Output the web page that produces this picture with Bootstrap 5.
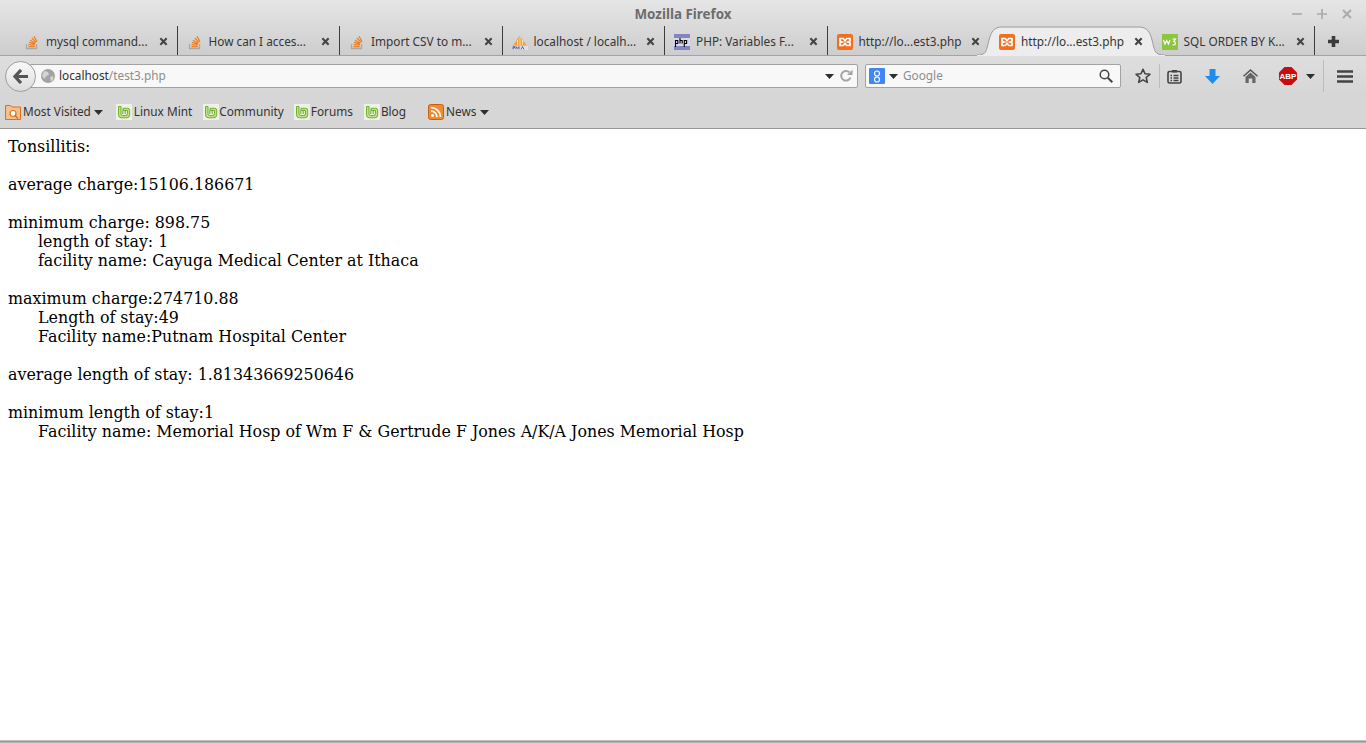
<!DOCTYPE html>
<html lang="en">
<head>
<meta charset="utf-8">
<title>Mozilla Firefox</title>
<link rel="stylesheet" href="https://cdn.jsdelivr.net/npm/bootstrap@5.3.0/dist/css/bootstrap.min.css">
<style>
html,body{height:100%;margin:0;background:#fff;overflow:hidden}
.win-shell{height:743px;font-family:"Noto Sans",sans-serif;font-size:12px;color:#333}
.chrome-top{background:linear-gradient(#e6e6e6,#cdcdcd);height:56px;border-bottom:1px solid #a3a3a3}
.title-row{height:26px;display:grid;grid-template-columns:1fr auto 1fr;align-items:center}
.win-title{font-weight:700;font-size:13.4px;color:#6d6d6d;line-height:1;padding-top:4px}
.win-ctrls{justify-self:end;gap:15px;padding:2px 14px 0 0}
.tab-row{height:29px;padding-left:15px}
.tab-item{width:162.5px;height:29px;padding:2px 8px 0 9px;border-right:1px solid #3c3c3c;white-space:nowrap;flex:none}
.tab-item.no-sep{border-right-color:transparent}
.tab-item svg.fav{flex:none;margin-right:6px;width:16px;height:16px}
.tab-text{flex:1 1 auto;overflow:hidden;font-size:11.8px;line-height:16px;color:#353535;margin-bottom:2px}
.tab-x{flex:none;margin-left:2px;margin-right:1px}
.tab-item.on{position:relative;z-index:1;border-right-color:transparent}
.tab-curve{position:absolute;left:-13px;top:0;width:188px;height:30px;z-index:-1}
.tab-add{width:36px;height:29px;padding-top:2px}
.bar-nav{height:40px;background:linear-gradient(#dedede,#d6d6d6);padding:0 0 0 5px}
.back-btn{width:31px;height:31px;border-radius:50%;border:1px solid #9d9d9d;background:linear-gradient(#fafafa,#dcdcdc);position:relative;z-index:1;margin-right:-6px;flex:none}
.url-box{width:828px;height:24px;background:#f8f8f8;border:1px solid #a2a2a2;border-radius:0 2px 2px 0;padding:0 4px 0 10px;flex:none}
.url-host{color:#333;font-size:11.8px}
.url-path{color:#8d8d8d;font-size:11.8px}
.reload-ico{margin-left:5px}
.find-box{width:256px;height:24px;background:#f8f8f8;border:1px solid #a2a2a2;border-radius:2px;margin-left:7px;padding:0 3px;flex:none}
.find-hint{color:#8d8d8d;font-size:11.8px;margin-left:5px}
.tool-cell{flex:none}
.tool-sep{width:1px;background:#bcbcbc;flex:none}
.bar-marks{height:33px;background:#d6d6d6;border-bottom:1px solid #989898;padding-left:5px}
.mark-item{white-space:nowrap;font-size:11.8px;color:#333;flex:none}
.mark-item svg{flex:none}
.page-body{font-family:"DejaVu Serif",serif;font-size:15.87px;line-height:19px;color:#000;padding:8px;flex:1 1 auto}
.gap-line{height:19px}
.indent-line{padding-left:30px}
.bottom-edge{height:3px;background:linear-gradient(#cfcfcf,#8f8f8f 60%,#c9c9c9);flex:none}
.flex-none{flex:none}
.tool-group{height:39px}
.star-tool{margin-left:14px}
.sep-a{height:24px;margin-left:8px}
.clip-tool{margin-left:7px}
.dl-tool{margin-left:23px}
.home-tool{margin-left:23px}
.abp-tool{margin-left:21px}
.abp-drop{margin-left:9px}
.sep-b{height:32px;margin-left:8px}
.menu-tool{margin-left:13px}
.ms-custom-a{margin-left:2px}
.caret-a{margin-left:3px}
.caret-b{margin-left:4px}
.lbl{margin-left:1px}
.lbl-m{margin-left:2px}
.lbl-c{margin-left:0}
.lbl-b{margin-left:2px}
.mk-1{margin-left:13px}
.mk-2{margin-left:11px}
.mk-3{margin-left:10px}
.mk-4{margin-left:11px}
.mk-5{margin-left:22px}
</style>
</head>
<body>
<svg width="0" height="0" class="d-none">
<symbol id="so" viewBox="0 0 16 16"><path d="M2.5 10v4.500h10V10" fill="none" stroke="#a8a8a8" stroke-width="1.300"/><path d="M4.500 12.600h6.200M4.600 10.600l6.100.6M5 8.400l6 1.600M6 6.200l5.400 3M7.800 4l4.300 4.400M10 2.200l3 5.400" fill="none" stroke="#ee8126" stroke-width="1.300"/></symbol>
<symbol id="xam" viewBox="0 0 16 16"><rect width="16" height="16" rx="2" fill="#f0701f"/><path d="M3 4.500h3.200L8 6.600l1.800-2.100H13v2.700L10.800 8l2.200.8v2.700H9.800L8 9.400l-1.800 2.100H3V8.800L5.200 8 3 7.200z" fill="none" stroke="#fff" stroke-width="1.700"/></symbol>
<symbol id="mint" viewBox="0 0 16 16"><rect width="16" height="16" fill="#eef1ea"/><path d="M2.500 2.500h2.500v7.300q0 1.700 1.700 1.700h3.100q1.700 0 1.700-1.700V6.500H7V4.300h4.700q2 0 2 2v4.500q0 3-3 3H5.500q-3 0-3-3z" fill="#bfe188" stroke="#6fb12b" stroke-width="1"/><path d="M6.800 10V6.500M9.200 10V6.500" stroke="#6fb12b" stroke-width="1.100"/></symbol>
<symbol id="close" viewBox="0 0 10 10"><path d="M1.500 1.500l7 7M8.500 1.500l-7 7" stroke="#444" stroke-width="2.300"/></symbol>
<symbol id="drop" viewBox="0 0 9 5"><path d="M0 0h9L4.500 5z" fill="#2e2e2e"/></symbol>
</svg>
<div class="win-shell d-flex flex-column">
  <div class="chrome-top flex-none">
    <div class="title-row">
      <div></div>
      <div class="win-title">Mozilla Firefox</div>
      <div class="win-ctrls d-flex align-items-center">
        <svg width="10" height="10" viewBox="0 0 10 10"><path d="M0 5h10" stroke="#a9a9a9" stroke-width="1.600"/></svg>
        <svg width="10" height="10" viewBox="0 0 10 10"><path d="M0 5h10M5 0v10" stroke="#a9a9a9" stroke-width="1.600"/></svg>
        <svg width="10" height="10" viewBox="0 0 10 10"><path d="M1 1l8 8M9 1l-8 8" stroke="#a9a9a9" stroke-width="1.800"/></svg>
      </div>
    </div>
    <div class="tab-row d-flex">
      <div class="tab-item d-flex align-items-center"><svg class="fav"><use href="#so"/></svg><span class="tab-text">mysql command...</span><svg class="tab-x" width="9" height="9"><use href="#close"/></svg></div>
      <div class="tab-item d-flex align-items-center"><svg class="fav"><use href="#so"/></svg><span class="tab-text">How can I acces...</span><svg class="tab-x" width="9" height="9"><use href="#close"/></svg></div>
      <div class="tab-item d-flex align-items-center"><svg class="fav"><use href="#so"/></svg><span class="tab-text">Import CSV to m...</span><svg class="tab-x" width="9" height="9"><use href="#close"/></svg></div>
      <div class="tab-item d-flex align-items-center"><svg class="fav" viewBox="0 0 16 16"><path d="M1 11.500L7.500 2 15 11.500z" fill="#f5a13c"/><path d="M5.500 11V6M8 11V3.500M10.500 11V6" stroke="#fce3bd" stroke-width=".9"/><rect x="0" y="12" width="16" height="4" fill="#dfe1ea"/><path d="M1 15.500v-3h1.500v1.500H1M4 15.500v-3l1.500 2 1.500-2v3M9 15.500l1.500-3 1.500 3" stroke="#3e4a82" stroke-width=".8" fill="none"/></svg><span class="tab-text">localhost / localh...</span><svg class="tab-x" width="9" height="9"><use href="#close"/></svg></div>
      <div class="tab-item d-flex align-items-center"><svg class="fav" viewBox="0 0 16 16"><rect width="16" height="16" fill="#8484c0"/><rect y="4" width="16" height="8" fill="#d9d9ee"/><path d="M1.500 13V6.500h2.300v3H1.500M6 4v5.500M6 6.500h2.200v3M10.300 13V6.500h2.300v3h-2.300" stroke="#000" stroke-width="1.100" fill="none"/></svg><span class="tab-text">PHP: Variables F...</span><svg class="tab-x" width="9" height="9"><use href="#close"/></svg></div>
      <div class="tab-item no-sep d-flex align-items-center"><svg class="fav"><use href="#xam"/></svg><span class="tab-text">http://lo...est3.php</span><svg class="tab-x" width="9" height="9"><use href="#close"/></svg></div>
      <div class="tab-item on d-flex align-items-center">
        <svg class="tab-curve" viewBox="0 0 188 30"><path d="M0 29c10 0 9-4 12-15C14 6 17 1 25 1h137c8 0 11 5 13 13 3 11 2 15 13 15v1H0z" fill="#ededed" stroke="#9b9b9b"/><path d="M0 30h188" stroke="#ededed" stroke-width="2"/></svg>
        <svg class="fav"><use href="#xam"/></svg><span class="tab-text">http://lo...est3.php</span><svg class="tab-x" width="9" height="9"><use href="#close"/></svg></div>
      <div class="tab-item d-flex align-items-center"><svg class="fav" viewBox="0 0 16 16"><rect width="16" height="16" fill="#8cc63f"/><path d="M1.500 6l1.500 4 1.700-3.500L6.500 10l1.500-4M10.500 5h3l-1.700 2.500c2 0 2.300 3.500-.3 3.500h-1" stroke="#fff" stroke-width="1.200" fill="none"/></svg><span class="tab-text">SQL ORDER BY K...</span><svg class="tab-x" width="9" height="9"><use href="#close"/></svg></div>
      <div class="tab-add d-flex align-items-center justify-content-center"><svg width="11" height="11" viewBox="0 0 11 11"><path d="M5.500 0v11M0 5.500h11" stroke="#3c3c3c" stroke-width="3.600"/></svg></div>
    </div>
  </div>

  <div class="bar-nav d-flex align-items-center flex-none">
    <div class="back-btn d-flex align-items-center justify-content-center">
      <svg width="16" height="15" viewBox="0 0 16 15"><path d="M8 1L2 7.500 8 14M2.500 7.500H15" fill="none" stroke="#555" stroke-width="3.200"/></svg>
    </div>
    <div class="url-box d-flex align-items-center">
      <svg class="me-1" width="14" height="14" viewBox="0 0 14 14"><circle cx="7" cy="7" r="7" fill="#a3a3a3"/><path d="M3 2l4 1 1 3-3 1-1 3-3-3zM9 8l3-1 .5 3-2.500 2.500z" fill="#d4d4d4"/></svg>
      <span class="url-host">localhost</span><span class="url-path">/test3.php</span>
      <svg class="ms-auto" width="9" height="5"><use href="#drop"/></svg>
      <svg class="reload-ico" width="14" height="14" viewBox="0 0 14 14"><path d="M11.500 8.500a4.800 4.800 0 1 1-1.200-5.200" fill="none" stroke="#a3a3a3" stroke-width="2"/><path d="M8 6h5.500V.5z" fill="#a3a3a3"/></svg>
    </div>
    <div class="find-box d-flex align-items-center">
      <svg width="16" height="16" viewBox="0 0 16 16" class="flex-none"><rect width="16" height="16" rx="1" fill="#4285f4"/><circle cx="8" cy="5.500" r="2.500" fill="none" stroke="#fff" stroke-width="1.200"/><circle cx="8" cy="11.500" r="2.500" fill="none" stroke="#fff" stroke-width="1.200"/></svg>
      <svg class="ms-1" width="9" height="5"><use href="#drop"/></svg>
      <span class="find-hint">Google</span>
      <svg class="ms-auto me-1" width="14" height="14" viewBox="0 0 14 14"><circle cx="5.500" cy="5.500" r="4.300" fill="none" stroke="#444" stroke-width="1.500"/><path d="M8.800 8.800L13.300 13.300" stroke="#444" stroke-width="2"/></svg>
    </div>
    <div class="d-flex align-items-center tool-group">
      <svg class="tool-cell star-tool" width="16" height="16" viewBox="0 0 16 16"><path d="M8 1.300l2 4.500 4.900.5-3.700 3.200 1.100 4.900L8 11.900l-4.300 2.500 1.100-4.900L1.100 6.300 6 5.800z" fill="none" stroke="#444" stroke-width="1.600" stroke-linejoin="round"/></svg>
      <div class="tool-sep sep-a"></div>
      <svg class="tool-cell clip-tool" width="15" height="15" viewBox="0 0 15 15"><rect x="1" y="2.500" width="13" height="11.500" rx="1.500" fill="none" stroke="#444" stroke-width="1.600"/><path d="M5 1h5v2.500H5z" fill="#444"/><path d="M3.500 6.500h1.500M6.500 6.500h5M3.500 9h1.500M6.500 9h5M3.500 11.500h1.500M6.500 11.500h5" stroke="#444" stroke-width="1.300"/></svg>
      <svg class="tool-cell dl-tool" width="15" height="15" viewBox="0 0 15 15"><path d="M4.500 0h6v7H15l-7.500 8L0 7h4.500z" fill="#1c8ef0"/></svg>
      <svg class="tool-cell home-tool" width="15" height="14" viewBox="0 0 15 14"><path d="M7.500 0L15 6.800l-1 1L7.500 2 1 7.800l-1-1z" fill="#555"/><path d="M2.500 8l5-4.500 5 4.500v6H9.300V9.500H5.700V14H2.500z" fill="#666"/></svg>
      <svg class="tool-cell abp-tool" width="18" height="18" viewBox="0 0 18 18"><path d="M5.500 0h7L18 5.500v7L12.500 18h-7L0 12.500v-7z" fill="#c70d0d"/><text x="9" y="12" text-anchor="middle" font-family="Liberation Sans,sans-serif" font-weight="700" font-size="8" fill="#fff">ABP</text></svg>
      <svg class="tool-cell abp-drop" width="9" height="5"><use href="#drop"/></svg>
      <div class="tool-sep sep-b"></div>
      <svg class="tool-cell menu-tool" width="16" height="13" viewBox="0 0 16 13"><path d="M0 1.500h16M0 6.500h16M0 11.500h16" stroke="#444" stroke-width="2.400"/></svg>
    </div>
  </div>

  <div class="bar-marks d-flex align-items-center flex-none">
    <div class="mark-item d-flex align-items-center">
      <svg width="16" height="16" viewBox="0 0 16 16"><path d="M.5 3V1.500h5L7 3h8.500v12.500H.5z" fill="#f3c089" stroke="#d9701b"/><circle cx="8" cy="9.500" r="3" fill="#fff" stroke="#d9701b" stroke-width="1.200"/><path d="M10 11.500l3 3" stroke="#d9701b" stroke-width="1.500"/></svg>
      <span class="ms-custom-a">Most Visited</span>
      <svg class="caret-a" width="9" height="5"><use href="#drop"/></svg>
    </div>
    <div class="mark-item mk-1 d-flex align-items-center"><svg width="16" height="16"><use href="#mint"/></svg><span class="lbl-m">Linux Mint</span></div>
    <div class="mark-item mk-2 d-flex align-items-center"><svg width="16" height="16"><use href="#mint"/></svg><span class="lbl-c">Community</span></div>
    <div class="mark-item mk-3 d-flex align-items-center"><svg width="16" height="16"><use href="#mint"/></svg><span class="lbl">Forums</span></div>
    <div class="mark-item mk-4 d-flex align-items-center"><svg width="16" height="16"><use href="#mint"/></svg><span class="lbl">Blog</span></div>
    <div class="mark-item mk-5 d-flex align-items-center">
      <svg width="16" height="16" viewBox="0 0 16 16"><rect x=".5" y=".5" width="15" height="15" rx="2" fill="#f28a2e" stroke="#c9601a"/><circle cx="4.500" cy="11.500" r="1.500" fill="#fff"/><path d="M3 7a6 6 0 0 1 6 6M3 3.500A9.500 9.500 0 0 1 12.500 13" fill="none" stroke="#fff" stroke-width="1.700"/></svg>
      <span class="lbl-b">News</span>
      <svg class="caret-b" width="9" height="5"><use href="#drop"/></svg>
    </div>
  </div>

  <main class="page-body">
    <div>Tonsillitis:</div>
    <div class="gap-line"></div>
    <div>average charge:15106.186671</div>
    <div class="gap-line"></div>
    <div>minimum charge: 898.75</div>
    <div class="indent-line">length of stay: 1</div>
    <div class="indent-line">facility name: Cayuga Medical Center at Ithaca</div>
    <div class="gap-line"></div>
    <div>maximum charge:274710.88</div>
    <div class="indent-line">Length of stay:49</div>
    <div class="indent-line">Facility name:Putnam Hospital Center</div>
    <div class="gap-line"></div>
    <div>average length of stay: 1.81343669250646</div>
    <div class="gap-line"></div>
    <div>minimum length of stay:1</div>
    <div class="indent-line">Facility name: Memorial Hosp of Wm F &amp; Gertrude F Jones A/K/A Jones Memorial Hosp</div>
  </main>
  <div class="bottom-edge"></div>
</div>
</body>
</html>
